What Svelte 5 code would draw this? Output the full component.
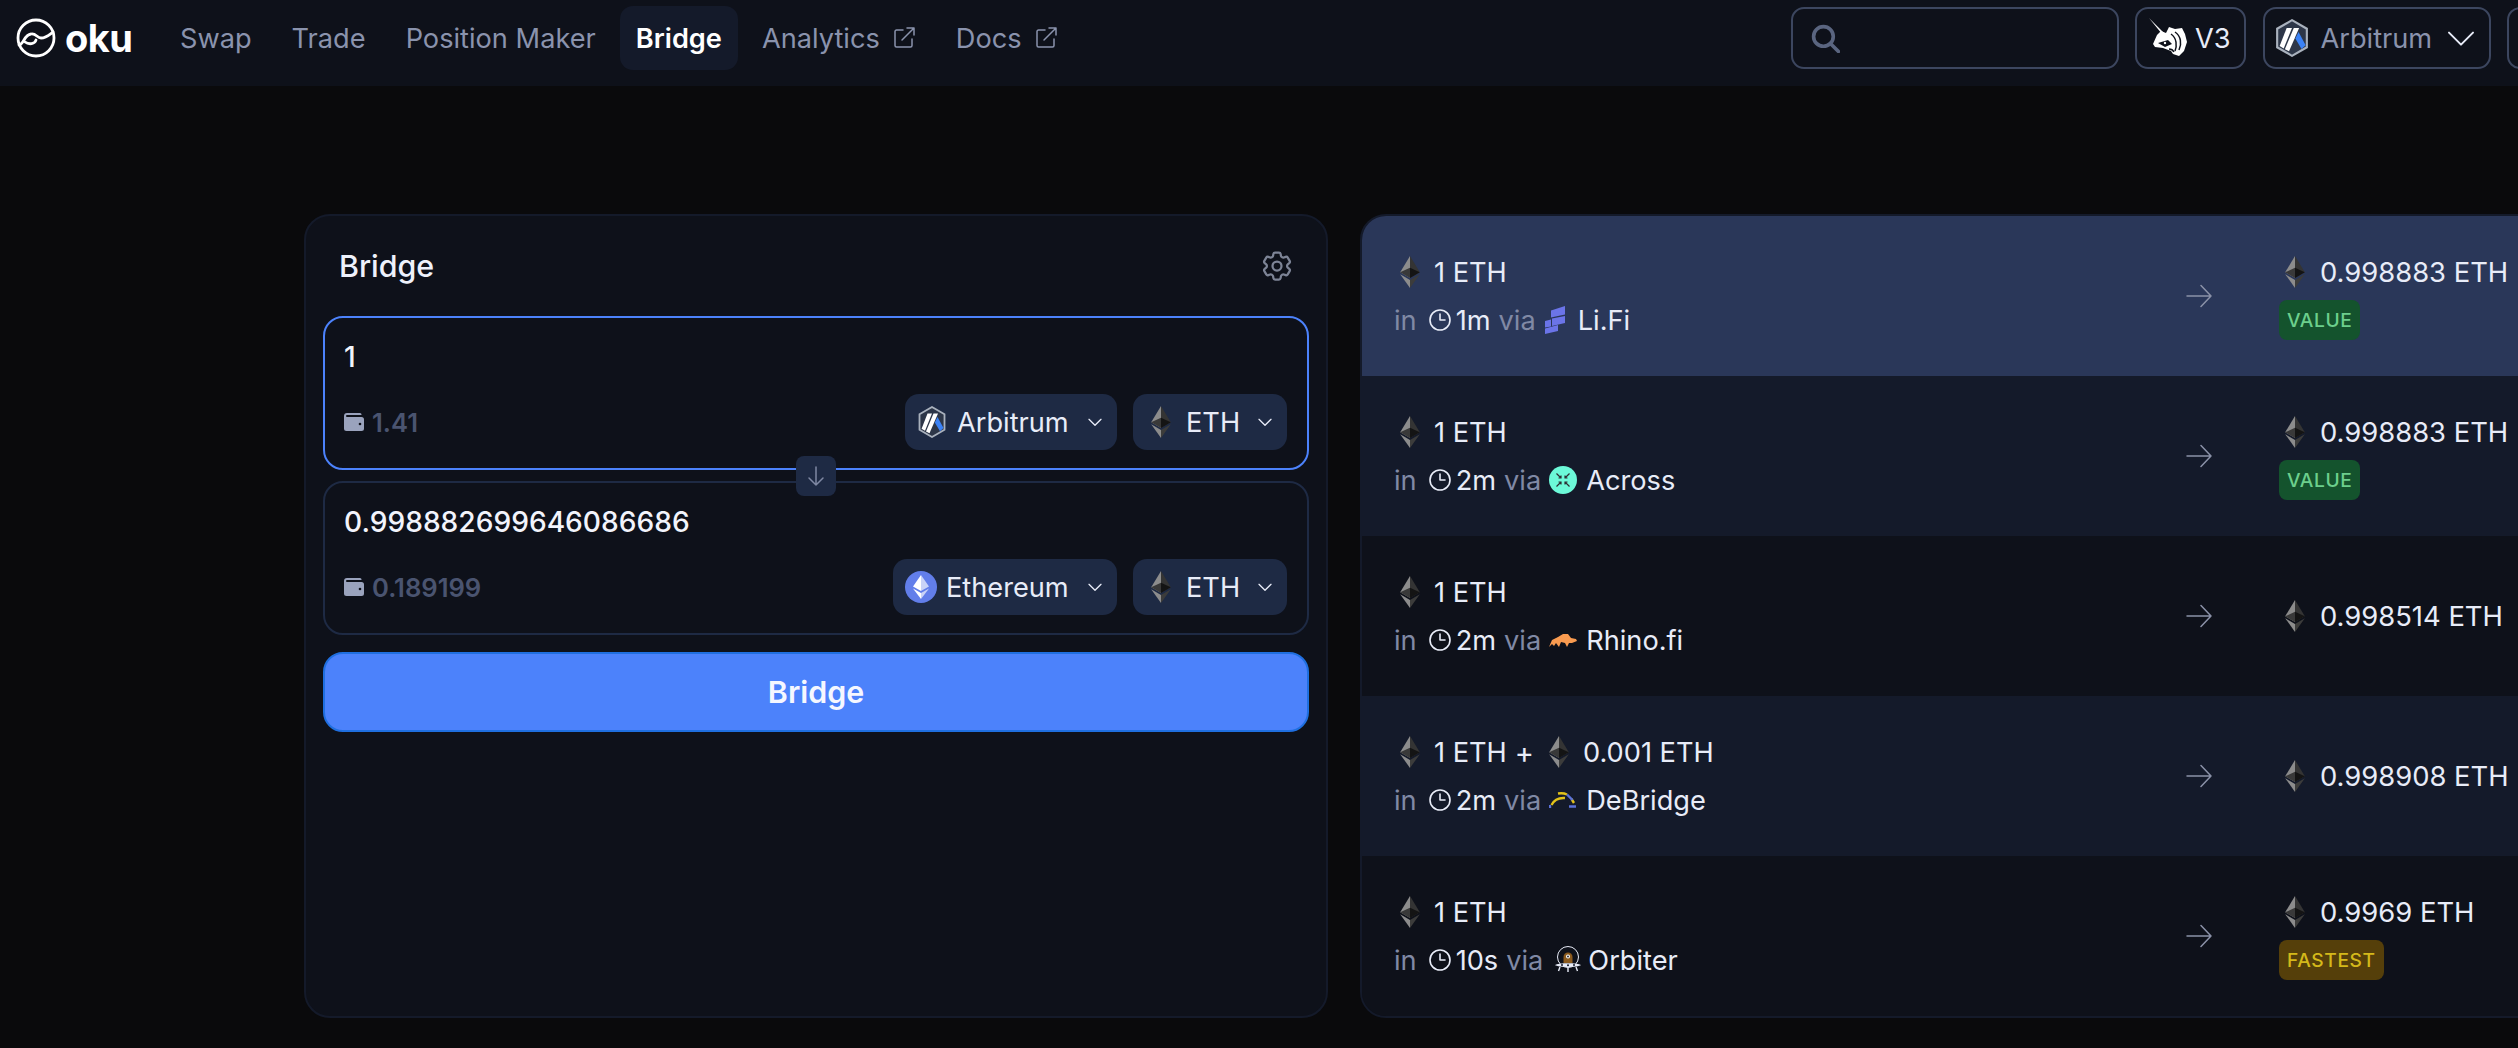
<script>
  const navLinks = [
    { label: 'Swap' },
    { label: 'Trade' },
    { label: 'Position Maker' },
    { label: 'Bridge', active: true },
    { label: 'Analytics', external: true },
    { label: 'Docs', external: true }
  ];

  const routes = [
    { extra: null, time: '1m', via: 'Li.Fi', logo: 'lifi', out: '0.998883', badge: 'value', tone: 'selected' },
    { extra: null, time: '2m', via: 'Across', logo: 'across', out: '0.998883', badge: 'value', tone: 'alt' },
    { extra: null, time: '2m', via: 'Rhino.fi', logo: 'rhino', out: '0.998514', badge: null, tone: '' },
    { extra: '0.001', time: '2m', via: 'DeBridge', logo: 'debridge', out: '0.998908', badge: null, tone: 'alt' },
    { extra: null, time: '10s', via: 'Orbiter', logo: 'orbiter', out: '0.9969', badge: 'fastest', tone: '' }
  ];
</script>

{#snippet eth()}
  <svg class="eth" viewBox="0 0 784 1277" aria-hidden="true">
    <polygon fill="#343434" points="392,0 392,882 784,650" />
    <polygon fill="#8c8c8c" points="392,0 0,650 392,882 392,472" />
    <polygon fill="#3c3c3b" points="392,956 392,1277 784,725" />
    <polygon fill="#8c8c8c" points="392,1277 392,956 0,725" />
    <polygon fill="#141414" points="392,882 784,650 392,472" />
    <polygon fill="#393939" points="0,650 392,882 392,472" />
  </svg>
{/snippet}

{#snippet arbitrum(cls)}
  <svg class={cls} viewBox="0 0 28 32" aria-hidden="true">
    <polygon points="14,1 26.5,8.2 26.500,23.800 14,31 1.500,23.800 1.500,8.200" fill="#2d3648" stroke="#a9b1bd" stroke-width="1.800" />
    <polygon points="9.500,7.500 14,7.500 7,24.800 3.600,22.800" fill="#fff" />
    <polygon points="15.500,7.500 20,7.500 11.500,27.200 8,25.400" fill="#fff" />
    <polygon points="19.500,11 25.500,22 22,25.200 16.800,16.500" fill="#3b82f6" />
  </svg>
{/snippet}

{#snippet chevron(cls)}
  <svg class={cls} viewBox="0 0 24 24" fill="none" stroke="currentColor" stroke-width="2" stroke-linecap="round" stroke-linejoin="round" aria-hidden="true">
    <path d="M3 8l9 9 9-9" />
  </svg>
{/snippet}

{#snippet wallet()}
  <svg class="wallet" viewBox="0 0 20 18" aria-hidden="true">
    <path d="M3 0h13a1.500 1.500 0 0 1 1.500 1.500V2H3a1 1 0 0 0 0 2h14.500A2.500 2.500 0 0 1 20 6.500V15.500A2.500 2.500 0 0 1 17.500 18H2.500A2.500 2.500 0 0 1 0 15.500V3a3 3 0 0 1 3-3z" fill="#9aa3bd" />
    <circle cx="16" cy="11" r="1.300" fill="#0e111a" />
  </svg>
{/snippet}

{#snippet externalLink()}
  <svg class="ext" viewBox="0 0 24 24" fill="none" stroke="currentColor" stroke-width="1.500" stroke-linecap="round" stroke-linejoin="round" aria-hidden="true">
    <path d="M11 4H4.500A1.500 1.500 0 0 0 3 5.500v14A1.500 1.500 0 0 0 4.500 21h14a1.500 1.500 0 0 0 1.500-1.500V13" />
    <path d="M10 14L22 2M15 2h7v7" />
  </svg>
{/snippet}

{#snippet unicorn()}
  <svg class="unicorn" viewBox="0 0 38 40" aria-hidden="true">
    <path d="M0 0l15 15-2 1z" fill="#fff" />
    <path d="M12 13l5 2 3-6 6 2 7-1 3 6 2 8-3 9-5 5-6-2-2-3-8-3-8-1-2-3 4-9z" fill="#fff" />
    <path d="M9 25l10-3 4 4-7 3z" fill="#0e111a" />
    <circle cx="16" cy="25" r="1.200" fill="#fff" />
    <path d="M26 14c6 4 7 12 4 18M22 16c6 4 6 12 4 17M20 31c2 0 4 1 5 3M13 32c3 0 6 1 8 5" fill="none" stroke="#0e111a" stroke-width="1.500" />
  </svg>
{/snippet}

{#snippet routeLogo(name)}
  {#if name === 'lifi'}
    <svg class="logo lifi" viewBox="0 0 20 28" aria-hidden="true">
      <polygon points="6,4.500 20,0 20,8.500 6,11.500" fill="#6b74e8" />
      <polygon points="7,12.500 20,10 20,17 7,20" fill="#6b74e8" />
      <polygon points="0,15 6,13.500 6,20.500 0,21.500" fill="#6b74e8" />
      <polygon points="0,22.500 13,19 13,25 0,28" fill="#6b74e8" />
    </svg>
  {:else if name === 'across'}
    <svg class="logo" viewBox="0 0 28 28" aria-hidden="true">
      <circle cx="14" cy="14" r="14" fill="#6cf9d8" />
      <path d="M7.500 7.500l4.500 4.500M20.500 7.500L16 12M7.500 20.500L12 16M20.500 20.500L16 16M12 9.500V12H9.500M16 9.500V12h2.500M12 18.500V16H9.500M16 18.500V16h2.500" fill="none" stroke="#2d2e33" stroke-width="1.200" />
    </svg>
  {:else if name === 'rhino'}
    <svg class="logo" viewBox="0 0 28 28" aria-hidden="true">
      <path d="M0 21l3-7 6-3 5-3h5l3 4 5 1 1 2-5 2h-3l-2 4-2-4-4-1-2 5-3-4-2 3-2-2z" fill="#f99b50" />
    </svg>
  {:else if name === 'debridge'}
    <svg class="logo" viewBox="0 0 28 28" aria-hidden="true">
      <path d="M2.500 19C5 14 10 11.500 16 12M9 7.500c3-.5 6-.5 9 1M22.500 13l2.500 4" fill="none" stroke="#e2c21a" stroke-width="2.400" />
      <path d="M1 19v3M18 8.500l5.500 5.500M20 20.500h7" fill="none" stroke="#5b72d8" stroke-width="2.400" />
    </svg>
  {:else}
    <svg class="logo orbiter" viewBox="0 0 28 28" aria-hidden="true">
      <circle cx="14" cy="11" r="10.500" fill="none" stroke="#e8ecf8" stroke-width="1" />
      <path d="M9.500 17v-6a4.500 4.500 0 0 1 9 0v6z" fill="#8a5a1e" />
      <circle cx="14" cy="10.500" r="2" fill="#fff" />
      <circle cx="14" cy="10.500" r=".9" fill="#141a2a" />
      <path d="M1 19c3-2.500 23-2.500 26 0-3 2.600-23 2.600-26 0z" fill="#e8ecf8" />
      <circle cx="8" cy="19" r="1" fill="#141a2a" />
      <circle cx="14" cy="19.300" r="1" fill="#141a2a" />
      <circle cx="20" cy="19" r="1" fill="#141a2a" />
      <path d="M6 21l-1.500 4M14 21.500V26M22 21l1.500 4" stroke="#e8ecf8" stroke-width="1.400" />
    </svg>
  {/if}
{/snippet}

<div class="page">
  <nav class="nav">
    <div class="brand">
      <svg class="brand-mark" viewBox="0 0 40 40" fill="none" stroke="#fff" stroke-width="2.800" stroke-linecap="round" aria-hidden="true">
        <circle cx="20" cy="20" r="18" />
        <path d="M3 27C8 26 8 17 15 16c5-1 6 4 10 4 5 0 8-3 12-6" />
        <path d="M9 24c4 3 10 2 11-2" />
      </svg>
      <span class="brand-name">oku</span>
    </div>
    <div class="nav-links">
      {#each navLinks as link}
        <div class="nav-link" class:active={link.active}>
          {link.label}
          {#if link.external}{@render externalLink()}{/if}
        </div>
      {/each}
    </div>
    <div class="nav-right">
      <div class="nav-box search">
        <svg class="search-icon" viewBox="0 0 28 28" fill="none" stroke="#5a6580" stroke-width="3.500" stroke-linecap="round" aria-hidden="true">
          <circle cx="12" cy="12" r="9.500" />
          <path d="M19 19l7.500 7.500" />
        </svg>
      </div>
      <div class="nav-box version">{@render unicorn()}<span>V3</span></div>
      <div class="nav-box network">
        {@render arbitrum('arb-nav')}
        <span>Arbitrum</span>
        {@render chevron('nav-chevron')}
      </div>
      <div class="nav-box clipped"></div>
    </div>
  </nav>

  <main class="main">
    <section class="card">
      <header class="card-head">
        <h2>Bridge</h2>
        <svg class="gear" viewBox="0 0 24 24" fill="none" stroke="#7d8496" stroke-width="1.500" aria-hidden="true">
          <path stroke-linecap="round" stroke-linejoin="round" d="M9.594 3.94c.09-.542.56-.94 1.11-.94h2.593c.55 0 1.02.398 1.11.94l.213 1.281c.063.374.313.686.645.87.074.04.147.083.22.127.324.196.72.257 1.075.124l1.217-.456a1.125 1.125 0 011.37.49l1.296 2.247a1.125 1.125 0 01-.26 1.431l-1.003.827c-.293.24-.438.613-.431.992a6.759 6.759 0 010 .255c-.007.378.138.75.43.99l1.005.828c.424.35.534.954.26 1.43l-1.298 2.247a1.125 1.125 0 01-1.369.491l-1.217-.456c-.355-.133-.75-.072-1.076.124a6.57 6.57 0 01-.22.128c-.331.183-.581.495-.644.869l-.213 1.28c-.09.543-.56.941-1.11.941h-2.594c-.55 0-1.02-.398-1.11-.94l-.213-1.281c-.062-.374-.312-.686-.644-.87a6.52 6.52 0 01-.22-.127c-.325-.196-.72-.257-1.076-.124l-1.217.456a1.125 1.125 0 01-1.369-.49l-1.297-2.247a1.125 1.125 0 01.26-1.431l1.004-.827c.292-.24.437-.613.43-.992a6.932 6.932 0 010-.255c.007-.378-.138-.75-.43-.99l-1.004-.828a1.125 1.125 0 01-.26-1.43l1.297-2.247a1.125 1.125 0 011.37-.491l1.216.456c.356.133.751.072 1.076-.124.072-.044.146-.087.22-.128.332-.183.582-.495.644-.869l.214-1.281z" />
          <path stroke-linecap="round" stroke-linejoin="round" d="M15 12a3 3 0 11-6 0 3 3 0 016 0z" />
        </svg>
      </header>

      <div class="inputs">
        <div class="field focused">
          <div class="amount">1</div>
          <div class="field-row">
            <div class="balance">{@render wallet()}<span>1.41</span></div>
            <div class="pills">
              <div class="pill chain">
                {@render arbitrum('arb-pill')}
                <span>Arbitrum</span>
                {@render chevron('pill-chevron')}
              </div>
              <div class="pill token">
                {@render eth()}
                <span>ETH</span>
                {@render chevron('pill-chevron')}
              </div>
            </div>
          </div>
        </div>

        <div class="swap-arrow">
          <svg viewBox="0 0 24 24" fill="none" stroke="#7f88a3" stroke-width="1.500" stroke-linecap="round" stroke-linejoin="round" aria-hidden="true">
            <path d="M12 3v18M5 14l7 7 7-7" />
          </svg>
        </div>

        <div class="field">
          <div class="amount">0.998882699646086686</div>
          <div class="field-row">
            <div class="balance">{@render wallet()}<span>0.189199</span></div>
            <div class="pills">
              <div class="pill chain eth-chain">
                <svg class="eth-badge" viewBox="0 0 32 32" aria-hidden="true">
                  <circle cx="16" cy="16" r="16" fill="#627eea" />
                  <polygon points="16,4 16,20 24,15.500" fill="#c9d3f7" />
                  <polygon points="16,4 8,15.500 16,20" fill="#fff" />
                  <polygon points="16,22 16,28 24,17.500" fill="#c9d3f7" />
                  <polygon points="16,22 16,28 8,17.500" fill="#fff" />
                </svg>
                <span>Ethereum</span>
                {@render chevron('pill-chevron')}
              </div>
              <div class="pill token">
                {@render eth()}
                <span>ETH</span>
                {@render chevron('pill-chevron')}
              </div>
            </div>
          </div>
        </div>
      </div>

      <button class="bridge-btn">Bridge</button>
    </section>

    <section class="routes">
      {#each routes as route}
        <div class="route {route.tone}">
          <div class="route-info">
            <div class="line">
              <span class="eth-box">{@render eth()}</span>
              <span>1 ETH</span>
              {#if route.extra}
                <span class="plus">+</span>
                <span class="eth-box">{@render eth()}</span>
                <span>{route.extra} ETH</span>
              {/if}
            </div>
            <div class="line">
              <span class="muted">in</span>
              <svg class="clock" viewBox="0 0 24 24" fill="none" stroke="currentColor" stroke-width="1.600" stroke-linecap="round" stroke-linejoin="round" aria-hidden="true">
                <circle cx="12" cy="12" r="10" />
                <path d="M12 6v6h5" />
              </svg>
              <span class="time">{route.time}</span>
              <span class="muted via">via</span>
              {@render routeLogo(route.logo)}
              <span class="provider">{route.via}</span>
            </div>
          </div>
          <svg class="arrow" viewBox="0 0 26 24" fill="none" stroke="#8b92a8" stroke-width="1.500" stroke-linecap="round" stroke-linejoin="round" aria-hidden="true">
            <path d="M1 12h24M15 1.500L25 12 15 22.500" />
          </svg>
          <div class="route-out">
            <div class="line">
              <span class="eth-box">{@render eth()}</span>
              <span>{route.out} ETH</span>
            </div>
            {#if route.badge === 'value'}
              <span class="badge value">VALUE</span>
            {:else if route.badge === 'fastest'}
              <span class="badge fastest">FASTEST</span>
            {/if}
          </div>
        </div>
      {/each}
    </section>
  </main>
</div>

<style>
  :global(body) {
    margin: 0;
    background: #0a0a0c;
    overflow: hidden;
  }

  .page {
    width: 2518px;
    height: 1048px;
    overflow: hidden;
    font-family: Inter, "Liberation Sans", sans-serif;
    font-size: 27.2px;
    color: #e8ecf8;
  }

  /* top bar */
  .nav {
    height: 86px;
    background: #0e111a;
    display: flex;
    align-items: flex-start;
    padding: 6px 0 0 16px;
    box-sizing: border-box;
  }

  .brand {
    display: flex;
    align-items: center;
    gap: 9px;
    height: 64px;
    width: 148px;
    flex-shrink: 0;
  }

  .brand-mark {
    width: 40px;
    height: 40px;
  }

  .brand-name {
    font-size: 38px;
    font-weight: 700;
    color: #fff;
    letter-spacing: -0.5px;
  }

  .nav-links {
    display: flex;
    gap: 8px;
    flex-shrink: 0;
  }

  .nav-link {
    height: 64px;
    padding: 0 16px;
    display: flex;
    align-items: center;
    gap: 12px;
    color: #8a93ad;
    border-radius: 13px;
  }

  .nav-link.active {
    background: #141a2a;
    color: #fff;
    font-weight: 600;
  }

  .ext {
    width: 24px;
    height: 24px;
  }

  .nav-right {
    margin-left: auto;
    margin-right: -90px;
    display: flex;
    gap: 16.5px;
    flex-shrink: 0;
    padding-top: 1px;
  }

  .nav-box {
    height: 62px;
    box-sizing: border-box;
    border: 2px solid #3c465f;
    border-radius: 13px;
    display: flex;
    align-items: center;
  }

  .search {
    width: 328px;
    padding-left: 18px;
  }

  .search-icon {
    width: 29px;
    height: 29px;
  }

  .version {
    width: 111px;
    padding-left: 12px;
    gap: 8px;
    color: #e8ecf8;
  }

  .unicorn {
    width: 38px;
    height: 40px;
  }

  .network {
    width: 228px;
    padding-left: 10px;
    color: #8a93ad;
  }

  .arb-nav {
    width: 34px;
    height: 38px;
    margin-right: 12px;
  }

  .nav-chevron {
    width: 32px;
    height: 32px;
    margin-left: auto;
    margin-right: 12px;
    stroke-width: 1.500;
    color: #e8ecf8;
  }

  .clipped {
    width: 101px;
  }

  /* page body */
  .main {
    display: flex;
    gap: 32px;
    padding: 128px 0 0 304px;
    width: 3000px;
  }

  .card {
    width: 1024px;
    height: 804px;
    box-sizing: border-box;
    background: #0e111a;
    border: 2px solid #141a2a;
    border-radius: 26px;
    padding: 0 17px;
    flex-shrink: 0;
  }

  .card-head {
    height: 100px;
    display: flex;
    align-items: center;
    justify-content: space-between;
    padding: 0 14px 0 16px;
    box-sizing: border-box;
  }

  .card-head h2 {
    margin: 0;
    font-size: 30.4px;
    font-weight: 500;
    color: #eef1fb;
  }

  .gear {
    width: 36px;
    height: 36px;
  }

  .inputs {
    position: relative;
    display: flex;
    flex-direction: column;
    gap: 11px;
  }

  .field {
    height: 154px;
    box-sizing: border-box;
    border: 2px solid #1e2a44;
    border-radius: 20px;
    padding: 19px 20px 0 19px;
  }

  .field.focused {
    border-color: #4c82fb;
  }

  .amount {
    height: 41px;
    line-height: 41px;
    font-size: 28.16px;
    font-weight: 500;
    color: #f2f4fc;
  }

  .field-row {
    display: flex;
    align-items: center;
    justify-content: space-between;
    margin-top: 16px;
  }

  .balance {
    display: flex;
    align-items: center;
    gap: 8px;
    font-size: 25.6px;
    font-weight: 600;
    color: #4a5470;
  }

  .wallet {
    width: 20px;
    height: 18px;
  }

  .pills {
    display: flex;
    gap: 16px;
  }

  .pill {
    height: 56px;
    box-sizing: border-box;
    background: #1e2a44;
    border-radius: 14px;
    display: flex;
    align-items: center;
    color: #e8ecf8;
  }

  .chain {
    width: 212px;
    padding-left: 13px;
  }

  .eth-chain {
    width: 224px;
    padding-left: 12px;
  }

  .token {
    width: 154px;
    padding-left: 18px;
  }

  .token .eth {
    margin-right: 15px;
  }

  .arb-pill {
    width: 28px;
    height: 32px;
    margin-right: 11px;
  }

  .eth-badge {
    width: 32px;
    height: 32px;
    margin-right: 9px;
  }

  .pill-chevron {
    width: 16px;
    height: 16px;
    margin-left: auto;
    margin-right: 14px;
  }

  .swap-arrow {
    position: absolute;
    left: 473px;
    top: 140px;
    width: 40px;
    height: 40px;
    background: #1e2a44;
    border-radius: 8px;
    display: flex;
    align-items: center;
    justify-content: center;
  }

  .swap-arrow svg {
    width: 24px;
    height: 24px;
  }

  .bridge-btn {
    display: block;
    width: 100%;
    height: 80px;
    margin-top: 17px;
    background: #4c82fb;
    border: 2px solid #1f6fe0;
    border-radius: 20px;
    color: #f5f7ff;
    font-family: inherit;
    font-size: 30.4px;
    font-weight: 600;
  }

  .eth {
    width: 20px;
    height: 32px;
    flex-shrink: 0;
  }

  /* routes list */
  .routes {
    width: 1300px;
    height: 804px;
    box-sizing: border-box;
    background: #0e111a;
    border: 2px solid #141a2a;
    border-radius: 26px;
    overflow: hidden;
    flex-shrink: 0;
  }

  .route {
    height: 160px;
    box-sizing: border-box;
    display: flex;
    align-items: center;
    padding-left: 32px;
    background: #0e111a;
  }

  .route.selected {
    background: #2a3759;
  }

  .route.alt {
    background: #141a2a;
  }

  .route-info {
    width: 792px;
    flex-shrink: 0;
    display: flex;
    flex-direction: column;
    gap: 8px;
  }

  .line {
    height: 40px;
    display: flex;
    align-items: center;
    white-space: nowrap;
  }

  .eth-box {
    width: 32px;
    height: 32px;
    display: flex;
    align-items: center;
    justify-content: center;
    margin-right: 8px;
    flex-shrink: 0;
  }

  .plus {
    margin: 0 9px 0 8px;
    font-size: 29px;
  }

  .muted {
    color: #8089a5;
  }

  .clock {
    width: 24px;
    height: 24px;
    margin: 0 4px 0 11px;
    color: #e8ecf8;
  }

  .via {
    margin: 0 8px;
  }

  .logo {
    width: 28px;
    height: 28px;
    margin-right: 9px;
    flex-shrink: 0;
  }

  .lifi {
    width: 20px;
    height: 28px;
    margin-left: 1px;
    margin-right: 13px;
  }

  .orbiter {
    margin-left: 3px;
    margin-right: 6px;
  }

  .arrow {
    width: 26px;
    height: 24px;
    flex-shrink: 0;
  }

  .route-out {
    margin-left: 67px;
    display: flex;
    flex-direction: column;
    gap: 8px;
    align-items: flex-start;
  }

  .route-out .line {
    font-size: 27.4px;
  }

  .route-out .eth-box {
    margin-right: 9px;
  }

  .badge {
    height: 40px;
    line-height: 40px;
    padding: 0 8px;
    border-radius: 8px;
    font-size: 19.2px;
    font-weight: 500;
    letter-spacing: 0.6px;
  }

  .badge.value {
    background: #14532d;
    color: #6ccf8c;
  }

  .badge.fastest {
    background: #553f0a;
    color: #d4b81a;
  }
</style>
